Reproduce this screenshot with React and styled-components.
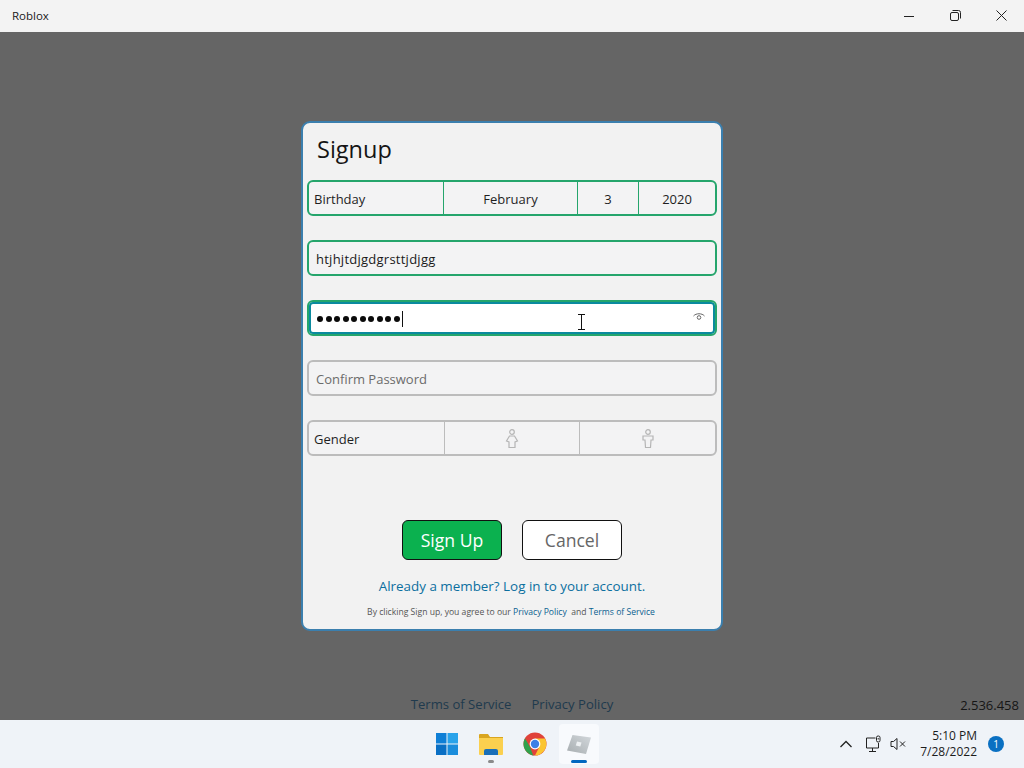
import React from 'react';
import styled, { createGlobalStyle } from 'styled-components';

const GlobalStyle = createGlobalStyle`
  html, body {
    margin: 0;
    padding: 0;
    height: 100%;
    overflow: hidden;
    font-family: "Open Sans", "Noto Sans", "Liberation Sans", sans-serif;
  }
  #root { height: 100%; }
`;

const Page = styled.div`
  width: 1024px;
  height: 768px;
  display: flex;
  flex-direction: column;
`;

const TitleBar = styled.div`
  box-sizing: border-box;
  height: 32px;
  flex: none;
  display: flex;
  align-items: center;
  justify-content: space-between;
  background: #f3f3f3;
  color: #1a1a1a;
  font-size: 11.5px;
  padding: 0 0 1px 12px;
`;

const WindowButtons = styled.div`
  display: flex;
`;

const WindowButton = styled.div`
  width: 46px;
  height: 31px;
  display: flex;
  align-items: center;
  justify-content: center;
  color: #222;
`;

const Main = styled.main`
  position: relative;
  flex: 1;
  background: #656565;
  display: grid;
  grid-template-rows: 1fr auto 1fr;
  justify-items: center;
`;

const Card = styled.div`
  grid-row: 2;
  box-sizing: border-box;
  width: 422px;
  height: 510px;
  background: #f2f2f2;
  border: 2px solid #3b7fae;
  border-radius: 9px;
  padding: 0 4px;
  display: flex;
  flex-direction: column;
`;

const Heading = styled.h1`
  box-sizing: border-box;
  margin: 0;
  height: 57px;
  flex: none;
  padding: 0 0 5px 10px;
  display: flex;
  align-items: center;
  font-size: 23.5px;
  font-weight: 400;
  color: #151515;
`;

const Fields = styled.div`
  display: flex;
  flex-direction: column;
  gap: 24px;
`;

const Field = styled.div`
  box-sizing: border-box;
  position: relative;
  width: 410px;
  height: 36px;
  display: flex;
  align-items: center;
  border-radius: 6px;
  border: 2px solid ${(p) => p.$color || '#bcbcbc'};
  box-shadow: ${(p) => (p.$focused ? 'inset 0 0 0 2px #0b8a9e' : 'none')};
  background: ${(p) => (p.$focused ? '#ffffff' : '#f3f3f4')};
  font-size: 13px;
  color: #1a1a1a;
`;

const Cell = styled.div`
  box-sizing: border-box;
  height: 100%;
  width: ${(p) => p.$width}px;
  flex: none;
  display: flex;
  align-items: center;
  justify-content: ${(p) => (p.$label ? 'flex-start' : 'center')};
  padding: 1px 0 0 ${(p) => (p.$label ? '5px' : '0')};
  border-left: ${(p) => (p.$first ? 'none' : `1px solid ${p.$line}`)};
  color: #1f1f1f;
`;

const FieldText = styled.span`
  padding: 2px 0 0 7px;
  letter-spacing: ${(p) => (p.$typed ? '0.25px' : '0')};
  color: ${(p) => p.$color || '#1a1a1a'};
`;

const Dots = styled.span`
  display: flex;
  gap: 2.5px;
  padding: 2px 0 0 8px;
`;

const Dot = styled.i`
  width: 6px;
  height: 6px;
  border-radius: 50%;
  background: #0a0a0a;
`;

const Caret = styled.i`
  width: 1px;
  height: 16px;
  background: #111;
  margin: 2px 0 0 2px;
`;

const EyeSlot = styled.span`
  position: absolute;
  right: 9px;
  top: 8px;
  display: flex;
  color: #666;
`;

const CursorSlot = styled.span`
  position: absolute;
  left: 268px;
  top: 12px;
  display: flex;
`;

const Buttons = styled.div`
  margin-top: 64px;
  display: flex;
  justify-content: center;
  gap: 20px;
`;

const Button = styled.div`
  box-sizing: border-box;
  width: 100px;
  height: 40px;
  display: flex;
  align-items: center;
  justify-content: center;
  border: 1px solid #111;
  border-radius: 6px;
  font-size: 17.6px;
  background: ${(p) => (p.$primary ? '#0bb14f' : '#ffffff')};
  color: ${(p) => (p.$primary ? '#ffffff' : '#666666')};
`;

const MemberLink = styled.div`
  margin-top: 16px;
  text-align: center;
  font-size: 13.4px;
  line-height: 20px;
  color: #0b6f9f;
`;

const Legal = styled.div`
  margin-top: 9px;
  padding-right: 2px;
  text-align: center;
  font-size: 8.6px;
  line-height: 14px;
  color: #555;
  white-space: pre;
`;

const LegalLink = styled.span`
  color: #0b6190;
`;

const Footer = styled.div`
  grid-row: 3;
  align-self: end;
  display: flex;
  gap: 20px;
  padding-bottom: 7px;
  font-size: 13.1px;
  line-height: 18px;
  color: #203a4d;
`;

const Version = styled.div`
  position: absolute;
  right: 5px;
  bottom: 6px;
  font-size: 13px;
  line-height: 18px;
  color: #161616;
`;

const Taskbar = styled.div`
  position: relative;
  height: 48px;
  flex: none;
  background: #eff3f8;
  display: flex;
  align-items: center;
  justify-content: center;
  gap: 4px;
  padding-left: 1px;
`;

const TaskItem = styled.div`
  position: relative;
  width: 40px;
  height: 40px;
  display: flex;
  align-items: center;
  justify-content: center;
  border-radius: 4px;
  background: ${(p) => (p.$active ? '#f8fafd' : 'transparent')};
`;

const RunningMark = styled.i`
  position: absolute;
  bottom: 1px;
  left: 50%;
  transform: translateX(-50%);
  height: 3px;
  border-radius: 2px;
  width: ${(p) => (p.$active ? 16 : 6)}px;
  background: ${(p) => (p.$active ? '#0067c0' : '#8a8a8a')};
`;

const Tray = styled.div`
  position: absolute;
  right: 0;
  top: 0;
  height: 48px;
  display: flex;
  align-items: center;
  color: #222;
`;

const TrayIcons = styled.div`
  display: flex;
  align-items: center;
  gap: 7px;
  margin-right: 14px;
`;

const ChevronSlot = styled.span`
  display: flex;
  margin-right: 5px;
`;

const Clock = styled.div`
  text-align: right;
  font-size: 12px;
  line-height: 16px;
  color: #1c1c1c;
  margin-right: 11px;
`;

const Badge = styled.div`
  width: 16px;
  height: 16px;
  margin-right: 20px;
  border-radius: 50%;
  background: #0a70c2;
  color: #fff;
  font-size: 10px;
  display: flex;
  align-items: center;
  justify-content: center;
`;

const Eye = () => (
  <svg width="14" height="14" viewBox="0 0 14 14" fill="none" stroke="currentColor" strokeWidth="1">
    <path d="M1.500 6C4 3 10 3 12.500 6" />
    <circle cx="7" cy="7.500" r="1.800" />
  </svg>
);

const IBeam = () => (
  <svg width="9" height="16" viewBox="0 0 9 16" fill="none" stroke="#111" strokeWidth="1">
    <path d="M1 .5h7M1 15.500h7M4.500 .5v15" />
  </svg>
);

const FemaleIcon = () => (
  <svg width="14" height="20" viewBox="0 0 14 20" fill="none" stroke="#b5b5b5" strokeWidth="1.200">
    <circle cx="7" cy="3" r="2.300" />
    <path d="M4.500 7h5l3 5-2.500 1v5.500H4V13l-2.500-1z" />
  </svg>
);

const MaleIcon = () => (
  <svg width="12" height="20" viewBox="0 0 12 20" fill="none" stroke="#b5b5b5" strokeWidth="1.200">
    <circle cx="6" cy="3" r="2.300" />
    <path d="M1 7h10v4H9l-.5 7.500h-5L3 11H1z" />
  </svg>
);

const WindowsLogo = () => (
  <svg width="24" height="24" viewBox="0 0 24 24">
    <path fill="#0f7fd6" d="M1 1h10.500v10.500H1z" />
    <path fill="#2aa3ea" d="M12.500 1H23v10.500H12.500z" />
    <path fill="#0a6fc4" d="M1 12.500h10.500V23H1z" />
    <path fill="#1b8ddc" d="M12.500 12.500H23V23H12.500z" />
  </svg>
);

const FolderIcon = () => (
  <svg width="26" height="24" viewBox="0 0 26 24">
    <path fill="#d9a520" d="M1 3a1 1 0 0 1 1-1h8l2 3h13v5H1z" />
    <path fill="#fbd04f" d="M1 6h24v16a1 1 0 0 1-1 1H2a1 1 0 0 1-1-1z" />
    <path fill="#1a6fb8" d="M6 19a2 2 0 0 1 2-2h10a2 2 0 0 1 2 2v4H6z" />
  </svg>
);

const ChromeIcon = () => (
  <svg width="24" height="24" viewBox="0 0 24 24">
    <circle cx="12" cy="12" r="11.500" fill="#e0423a" />
    <path fill="#2fa24c" d="M12 23.500A11.500 11.500 0 0 1 2 6.300L7 15l3 8z" />
    <path fill="#fbc531" d="M12 23.500A11.500 11.500 0 0 0 22 6.500H12l4 9z" />
    <circle cx="12" cy="12" r="5.400" fill="#fff" />
    <circle cx="12" cy="12" r="4.200" fill="#3d7fe6" />
  </svg>
);

const RobloxIcon = () => (
  <svg width="26" height="24" viewBox="0 0 26 24">
    <defs>
      <linearGradient id="robloxTile" x1="0" y1="1" x2="1" y2="0">
        <stop offset="0" stopColor="#a7adb0" />
        <stop offset="1" stopColor="#d3d8dc" />
      </linearGradient>
    </defs>
    <path fill="url(#robloxTile)" d="M6.500 3 25 5.500 20 22 1 18.500z" />
    <path fill="#eef1f3" d="M11 9.500l4.500 1-1.200 4-4.500-1z" />
  </svg>
);

const Chevron = () => (
  <svg width="14" height="14" viewBox="0 0 14 14" fill="none" stroke="currentColor" strokeWidth="1.300">
    <path d="M1.500 10 7 4.500 12.500 10" />
  </svg>
);

const NetworkIcon = () => (
  <svg width="18" height="18" viewBox="0 0 18 18" fill="none" stroke="currentColor" strokeWidth="1">
    <path d="M10.500 3H1.500v10h12V8M7.500 13v3M4 16.500h7" />
    <rect x="11.500" y="1" width="3.500" height="6" rx="1.500" />
    <path d="M13.200 3v1.500" />
  </svg>
);

const MuteIcon = () => (
  <svg width="16" height="16" viewBox="0 0 16 16" fill="none" stroke="currentColor" strokeWidth="1">
    <path d="M1 5.500h2.500L7 2.500v11l-3.500-3H1zM10 5.500l5 5M15 5.500l-5 5" />
  </svg>
);

const App = () => {
  const green = '#25a56c';
  return (
    <Page>
      <GlobalStyle />
      <TitleBar>
        Roblox
        <WindowButtons>
          <WindowButton>
            <svg width="10" height="10" viewBox="0 0 10 10" stroke="currentColor"><path d="M0 5.500h10" /></svg>
          </WindowButton>
          <WindowButton>
            <svg width="11" height="11" viewBox="0 0 11 11" fill="none" stroke="currentColor">
              <rect x=".5" y="2.500" width="8" height="8" rx="1.500" />
              <path d="M2.500.5h6a2 2 0 0 1 2 2v6" />
            </svg>
          </WindowButton>
          <WindowButton>
            <svg width="11" height="11" viewBox="0 0 11 11" stroke="currentColor"><path d="M.5.5l10 10M10.500.5l-10 10" /></svg>
          </WindowButton>
        </WindowButtons>
      </TitleBar>

      <Main>
        <Card>
          <Heading>Signup</Heading>
          <Fields>
            <Field $color={green}>
              <Cell $width={134} $label $first>Birthday</Cell>
              <Cell $width={134} $line={green}>February</Cell>
              <Cell $width={61} $line={green}>3</Cell>
              <Cell $width={77} $line={green}>2020</Cell>
            </Field>
            <Field $color={green}>
              <FieldText $typed>htjhjtdjgdgrsttjdjgg</FieldText>
            </Field>
            <Field $color={green} $focused>
              <Dots>
                {Array.from({ length: 10 }, (_, i) => <Dot key={i} />)}
              </Dots>
              <Caret />
              <CursorSlot><IBeam /></CursorSlot>
              <EyeSlot><Eye /></EyeSlot>
            </Field>
            <Field>
              <FieldText $color="#6b6b6b">Confirm Password</FieldText>
            </Field>
            <Field>
              <Cell $width={135} $label $first>Gender</Cell>
              <Cell $width={135} $line="#bcbcbc"><FemaleIcon /></Cell>
              <Cell $width={136} $line="#bcbcbc"><MaleIcon /></Cell>
            </Field>
          </Fields>
          <Buttons>
            <Button $primary>Sign Up</Button>
            <Button>Cancel</Button>
          </Buttons>
          <MemberLink>Already a member? Log in to your account.</MemberLink>
          <Legal>
            By clicking Sign up, you agree to our <LegalLink>Privacy Policy</LegalLink>  and <LegalLink>Terms of Service</LegalLink>
          </Legal>
        </Card>
        <Footer>
          <span>Terms of Service</span>
          <span>Privacy Policy</span>
        </Footer>
        <Version>2.536.458</Version>
      </Main>

      <Taskbar>
        <TaskItem><WindowsLogo /></TaskItem>
        <TaskItem><FolderIcon /><RunningMark /></TaskItem>
        <TaskItem><ChromeIcon /></TaskItem>
        <TaskItem $active><RobloxIcon /><RunningMark $active /></TaskItem>
        <Tray>
          <TrayIcons>
            <ChevronSlot><Chevron /></ChevronSlot>
            <NetworkIcon />
            <MuteIcon />
          </TrayIcons>
          <Clock>5:10 PM<br />7/28/2022</Clock>
          <Badge>1</Badge>
        </Tray>
      </Taskbar>
    </Page>
  );
};

export default App;
